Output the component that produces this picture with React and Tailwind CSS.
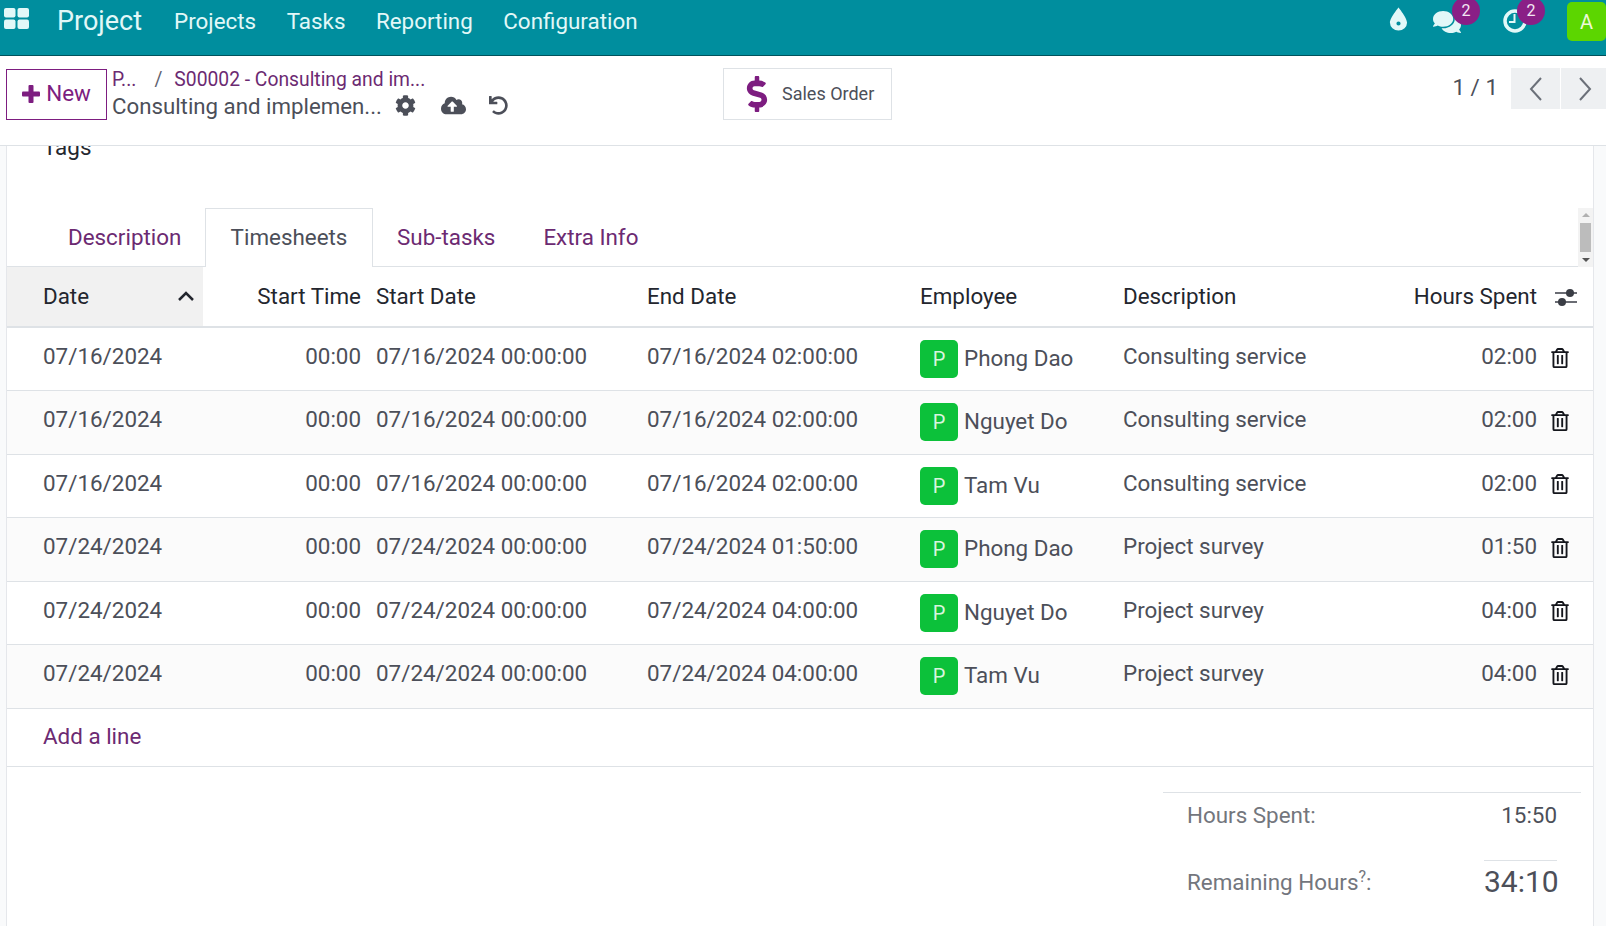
import React from 'react';
import { FaComments, FaCog, FaCloudUploadAlt, FaUndo, FaDollarSign, FaRegTrashAlt } from 'react-icons/fa';

const rows = [
  ['07/16/2024', '07/16/2024 00:00:00', '07/16/2024 02:00:00', 'Phong Dao', 'Consulting service', '02:00'],
  ['07/16/2024', '07/16/2024 00:00:00', '07/16/2024 02:00:00', 'Nguyet Do', 'Consulting service', '02:00'],
  ['07/16/2024', '07/16/2024 00:00:00', '07/16/2024 02:00:00', 'Tam Vu', 'Consulting service', '02:00'],
  ['07/24/2024', '07/24/2024 00:00:00', '07/24/2024 01:50:00', 'Phong Dao', 'Project survey', '01:50'],
  ['07/24/2024', '07/24/2024 00:00:00', '07/24/2024 04:00:00', 'Nguyet Do', 'Project survey', '04:00'],
  ['07/24/2024', '07/24/2024 00:00:00', '07/24/2024 04:00:00', 'Tam Vu', 'Project survey', '04:00'],
];

function AppsIcon() {
  return (
    <svg width="25" height="21" viewBox="0 0 25 21" fill="#e2f8f8">
      <rect x="0" y="0" width="11.5" height="9.5" rx="2" />
      <rect x="13.5" y="0" width="11.5" height="9.5" rx="2" />
      <rect x="0" y="11.5" width="11.5" height="9.5" rx="2" />
      <rect x="13.5" y="11.5" width="11.5" height="9.5" rx="2" />
    </svg>
  );
}

function DropIcon() {
  return (
    <svg width="19" height="24" viewBox="0 0 20 24" fill="#e2f8f8">
      <path fillRule="evenodd" d="M10 0C10 0 1 11 1 16a9 8 0 0 0 18 0C19 11 10 0 10 0ZM10 14.5a2.2 2.2 0 1 0 0 4.4a2.2 2.2 0 0 0 0-4.4Z" />
    </svg>
  );
}

function ClockIcon() {
  return (
    <svg width="24" height="24" viewBox="0 0 24 24" fill="none" stroke="#e2f8f8" strokeWidth="3.5">
      <circle cx="12" cy="12" r="10" />
      <path d="M11.5 5v8H6" strokeWidth="2" />
    </svg>
  );
}

function Badge({ className, children }) {
  return (
    <span className={`absolute w-[28px] h-[28px] rounded-full bg-[#8a1f86] text-[#f3e6f3] text-[16px] flex items-center justify-center ${className}`}>
      {children}
    </span>
  );
}

function Navbar() {
  return (
    <div className="h-[56px] bg-[#008e9e] border-b border-[#00525c] flex items-start text-[#e2f8f8] shrink-0">
      <div className="ml-[4px] mt-[8px]"><AppsIcon /></div>
      <span className="ml-[28px] mt-[3px] text-[27px] leading-[36px]">Project</span>
      <nav className="ml-[32px] mt-[5px] flex gap-[30.5px] text-[22.4px] leading-[32px]">
        <span>Projects</span>
        <span>Tasks</span>
        <span>Reporting</span>
        <span>Configuration</span>
      </nav>
      <div className="ml-auto flex items-start">
        <span className="mt-[7px]"><DropIcon /></span>
        <span className="relative ml-[25px] mt-[8px]"><FaComments size={28} /><Badge className="left-[19px] -top-[11px]">2</Badge></span>
        <span className="relative ml-[42px] mt-[9px]"><ClockIcon /><Badge className="left-[14px] -top-[12px]">2</Badge></span>
        <span className="ml-[40px] mt-[2px] w-[39px] h-[39px] rounded-[5px] bg-[#5cd600] text-[#eef9d8] text-[20px] flex items-center justify-center">A</span>
      </div>
    </div>
  );
}

function ControlPanel() {
  return (
    <div className="h-[90px] bg-white border-b border-[#dee2e6] flex items-start shrink-0">
      <button className="ml-[6px] mt-[13px] w-[101px] h-[51px] border border-[#7d1d80] flex items-center justify-center gap-[6px] text-[#7d1d80] text-[22.4px] pb-[2px]">
        <svg width="18" height="18" viewBox="0 0 18 18" fill="#7d1d80">
          <rect x="6.5" y="0" width="5" height="18" rx="1" />
          <rect x="0" y="6.5" width="18" height="5" rx="1" />
        </svg>
        <span>New</span>
      </button>
      <div className="ml-[5px] mt-[10px] w-[584px]">
        <div className="text-[#6c2a72] text-[19.3px] leading-[28px] flex">
          <span>P...</span>
          <span className="ml-[18px] text-[#5f636f]">/</span>
          <span className="ml-[12px]">S00002 - Consulting and im...</span>
        </div>
        <div className="flex items-center text-[#4c4f59] text-[22.25px] leading-[30px] -mt-[3px]">
          <span>Consulting and implemen...</span>
          <FaCog size={21} className="ml-[13px] mb-[2px]" />
          <FaCloudUploadAlt size={25} className="ml-[25px] mb-[2px]" />
          <FaUndo size={19} className="ml-[23px] mb-[2px]" />
        </div>
      </div>
      <button className="ml-[27px] mt-[12px] w-[169px] h-[52px] border border-[#dee2e6] flex items-center text-[#4c4f59] text-[18px] pb-[1px]">
        <FaDollarSign size={36} className="ml-[15px] text-[#7d1d80]" />
        <span className="ml-[7px] pb-[1px]">Sales Order</span>
      </button>
      <div className="ml-auto flex items-start mt-[12px]">
        <span className="text-[#4c4f59] text-[22.4px] leading-[38px] mr-[13px]">1 / 1</span>
        <span className="w-[49px] h-[41px] bg-[#eef0f2] flex items-center justify-center">
          <svg width="17" height="28" viewBox="0 0 17 28" fill="none" stroke="#6b7079" strokeWidth="2"><path d="M14 3 4 14l10 11" /></svg>
        </span>
        <span className="ml-[1px] w-[45px] h-[41px] bg-[#eef0f2] flex items-center justify-center pl-[3px]">
          <svg width="17" height="28" viewBox="0 0 17 28" fill="none" stroke="#6b7079" strokeWidth="2"><path d="M3 3l10 11L3 25" /></svg>
        </span>
      </div>
    </div>
  );
}

function Tabs() {
  return (
    <div className="h-[59px] mt-[62px] flex items-end relative border-b border-[#dee2e6] text-[22.4px]">
      <span className="ml-[61px] w-[137px] h-[58px] flex items-center text-[#6c2a72] whitespace-nowrap pt-[1px]">Description</span>
      <span className="-mb-px w-[168px] h-[59px] bg-white border border-b-0 border-[#dee2e6] flex items-center justify-center text-[#4c4f59]">Timesheets</span>
      <span className="ml-[24px] h-[58px] flex items-center text-[#6c2a72] pt-[1px]">Sub-tasks</span>
      <span className="ml-[48px] h-[58px] flex items-center text-[#6c2a72] pt-[1px]">Extra Info</span>
      <div className="absolute right-0 top-0 w-[15px] h-[59px] bg-[#f3f3f3] flex flex-col items-center justify-between py-[5px]">
        <span className="w-0 h-0 border-x-[4px] border-x-transparent border-b-[4px] border-b-[#b0b0b0]" />
        <span className="w-[11px] h-[29px] bg-[#bcbcbc]" />
        <span className="w-0 h-0 border-x-[4px] border-x-transparent border-t-[4px] border-t-[#555]" />
      </div>
    </div>
  );
}

function Table() {
  return (
    <table className="w-full table-fixed border-collapse text-[22.4px]">
      <colgroup>
        <col className="w-[196px]" />
        <col className="w-[166px]" />
        <col className="w-[271px]" />
        <col className="w-[273px]" />
        <col className="w-[203px]" />
        <col />
        <col className="w-[48px]" />
      </colgroup>
      <thead>
        <tr className="h-[60px] border-b-2 border-[#dee2e6] text-[#23262e] font-normal">
          <th className="bg-[#f1f1f1] pl-[36px] pr-[8px] font-normal text-left">
            <span className="flex items-center justify-between">
              Date
              <svg width="18" height="12" viewBox="0 0 18 12" fill="none" stroke="#23262e" strokeWidth="2.5"><path d="M2 10l7-7 7 7" /></svg>
            </span>
          </th>
          <th className="pr-[8px] font-normal text-right whitespace-nowrap">Start Time</th>
          <th className="pl-[7px] font-normal text-left">Start Date</th>
          <th className="pl-[7px] font-normal text-left">End Date</th>
          <th className="pl-[7px] font-normal text-left">Employee</th>
          <th className="pl-[7px] pr-[8px]">
            <span className="flex justify-between font-normal">
              <span>Description</span>
              <span>Hours Spent</span>
            </span>
          </th>
          <th>
            <svg className="ml-[9px]" width="24" height="20" viewBox="0 0 24 20" fill="none" stroke="#3a3d45" strokeWidth="1.5">
              <path d="M1 6h22M1 15h22" />
              <circle cx="16" cy="6" r="4" fill="#3a3d45" stroke="none" />
              <circle cx="8" cy="15" r="4" fill="#3a3d45" stroke="none" />
            </svg>
          </th>
        </tr>
      </thead>
      <tbody className="text-[#4c4f59]">
        {rows.map((row, i) => (
          <tr key={i} className={`h-[63.5px] border-b border-[#dee2e6] ${i % 2 ? 'bg-[#fbfbfb]' : 'bg-white'}`}>
            <td className="pl-[36px] pb-[4px]">{row[0]}</td>
            <td className="pr-[8px] pb-[4px] text-right">00:00</td>
            <td className="pl-[7px] pb-[4px] whitespace-nowrap">{row[1]}</td>
            <td className="pl-[7px] pb-[4px] whitespace-nowrap">{row[2]}</td>
            <td className="pl-[7px]">
              <span className="flex items-center">
                <span className="w-[38px] h-[38px] rounded-[5px] bg-[#0cc13a] text-[#d8f5de] text-[20px] flex items-center justify-center">P</span>
                <span className="ml-[6px]">{row[3]}</span>
              </span>
            </td>
            <td className="pl-[7px] pr-[8px] pb-[4px]">
              <span className="flex justify-between">
                <span>{row[4]}</span>
                <span>{row[5]}</span>
              </span>
            </td>
            <td className="pb-[3px]"><FaRegTrashAlt size={20} className="ml-[5px] text-[#14161c]" /></td>
          </tr>
        ))}
        <tr className="h-[58px] border-b border-[#dee2e6]">
          <td colSpan={7} className="pl-[36px] text-[#6c2a72]">Add a line</td>
        </tr>
      </tbody>
    </table>
  );
}

function Totals() {
  return (
    <div className="ml-auto mr-[12px] mt-[25px] w-[418px] border-t border-[#dee2e6] text-[22.4px] pl-[24px] pr-[24px]">
      <div className="h-[47px] flex items-center justify-between text-[#73767d]">
        <span>Hours Spent:</span>
        <span className="text-[#4c4f59]">15:50</span>
      </div>
      <div className="flex items-end justify-between text-[#73767d] mt-[20px]">
        <span className="mb-[3px]">Remaining Hours<sup className="text-[16px]">?</sup>:</span>
        <span className="w-[73px] text-right border-t border-[#dee2e6] text-[#4c4f59] text-[30px] leading-[42px]">34:10</span>
      </div>
    </div>
  );
}

export default function App() {
  return (
    <div className="w-[1606px] h-[926px] overflow-hidden bg-[#f9fafb] flex flex-col font-['Roboto',sans-serif]">
      <Navbar />
      <ControlPanel />
      <div className="flex-1 ml-[6px] mr-[12px] bg-white border-r border-l border-[#e5e7eb] relative overflow-hidden">
        <span className="absolute left-[36px] -top-[14px] text-[22.4px] leading-[30px] text-[#23262e]">Tags</span>
        <Tabs />
        <Table />
        <Totals />
      </div>
    </div>
  );
}
